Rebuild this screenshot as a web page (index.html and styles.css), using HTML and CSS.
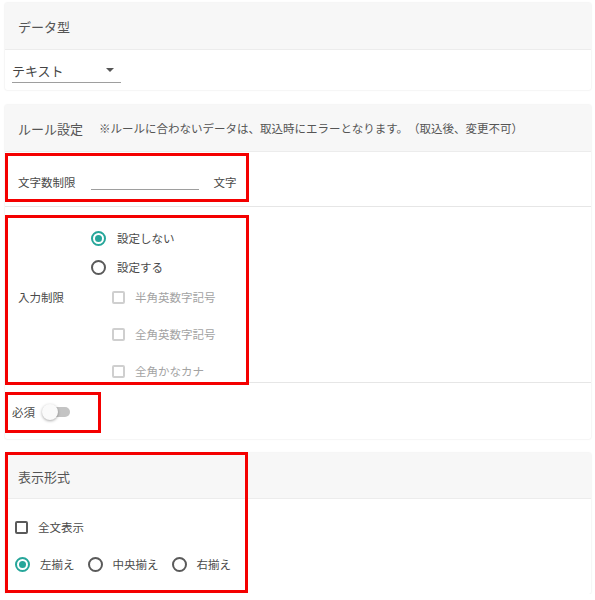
FILE: index.html
```html
<!DOCTYPE html>
<html lang="ja">
<head>
    <meta charset="UTF-8">
    <meta name="viewport" content="width=device-width, initial-scale=1.0">
    <title>データ型</title>
    <link rel="stylesheet" href="styles.css">
</head>
<body>
    <section class="card card-type">
        <div class="card-head">データ型</div>
        <div class="card-body select-row">
            <div class="select">
                <span>テキスト</span>
                <svg class="caret" width="8" height="4" viewBox="0 0 8 4"><path d="M0 0h8L4 4z" fill="#555"/></svg>
            </div>
        </div>
    </section>

    <section class="card card-rule">
        <div class="card-head">
            ルール設定<span class="note">※ルールに合わないデータは、取込時にエラーとなります。（取込後、変更不可）</span>
        </div>
        <div class="row row-length">
            <span class="label">文字数制限</span>
            <span class="line-input"></span>
            <span class="unit">文字</span>
            <div class="mark mark-length"></div>
        </div>
        <div class="row row-input">
            <span class="label label-input">入力制限</span>
            <div class="options">
                <label class="opt"><span class="radio checked"></span>設定しない</label>
                <label class="opt opt-2"><span class="radio"></span>設定する</label>
                <label class="opt opt-cb first disabled"><span class="box"></span>半角英数字記号</label>
                <label class="opt opt-cb disabled"><span class="box"></span>全角英数字記号</label>
                <label class="opt opt-cb disabled"><span class="box"></span>全角かなカナ</label>
            </div>
            <div class="mark mark-input"></div>
        </div>
        <div class="row row-required">
            <span class="label">必須</span>
            <span class="switch"><span class="thumb"></span></span>
            <div class="mark mark-required"></div>
        </div>
    </section>

    <section class="card card-view">
        <div class="card-head">表示形式</div>
        <div class="card-body view-body">
            <label class="opt"><span class="box dark"></span>全文表示</label>
            <div class="align-row">
                <label class="opt"><span class="radio checked"></span>左揃え</label>
                <label class="opt"><span class="radio"></span>中央揃え</label>
                <label class="opt"><span class="radio"></span>右揃え</label>
            </div>
        </div>
        <div class="mark mark-view"></div>
    </section>
</body>
</html>
```

FILE: styles.css
```css
*{
    margin: 0;
    padding: 0;
    box-sizing: border-box;
}
body{
    padding: 3px 4px 0 5px;
    font-family: "Noto Sans CJK JP", "Noto Sans", sans-serif;
    color: #4a4a4a;
    background: white;
    text-spacing-trim: space-all;
}
.card{
    position: relative;
    background: white;
    box-shadow: 0 0 2px rgba(0, 0, 0, 0.14);
    border-radius: 2px;
}
.card-rule{
    margin-top: 15px;
}
.card-view{
    margin-top: 14px;
}
.card-head{
    height: 47px;
    display: flex;
    align-items: center;
    padding-left: 13px;
    background-color: #f7f7f7;
    border-bottom: 1px solid #ececec;
    font-size: 13px;
    color: #555;
}
.card-view .card-head{
    height: 46px;
    padding-top: 2px;
}
.note{
    font-size: 11.5px;
    margin-left: 16px;
    color: #555;
}
.select-row{
    height: 40px;
    padding: 10px 0 0 7px;
}
.select{
    width: 109px;
    height: 23px;
    display: flex;
    align-items: center;
    justify-content: space-between;
    padding: 0 7px 2px 0;
    border-bottom: 1px solid #9e9e9e;
    font-size: 13px;
    color: #444;
}
.row{
    position: relative;
    display: flex;
    border-bottom: 1px solid #e6e6e6;
    font-size: 11.5px;
}
.row:last-child{
    border-bottom: none;
}
.row-length{
    height: 55px;
    align-items: center;
    padding: 6px 0 0 13px;
}
.line-input{
    width: 108px;
    height: 15px;
    margin-left: 15px;
    border-bottom: 1px solid #9e9e9e;
}
.unit{
    margin-left: 15px;
}
.row-input{
    height: 176px;
    padding: 23px 0 0 13px;
}
.label-input{
    width: 73px;
    margin-top: 59px;
    line-height: 16px;
}
.options{
    display: flex;
    flex-direction: column;
}
.opt{
    display: flex;
    align-items: center;
    height: 16px;
    font-size: 11.5px;
    color: #4a4a4a;
}
.opt-2{
    margin-top: 13px;
}
.opt-cb{
    margin-top: 21px;
    padding-left: 21px;
}
.opt-cb.first{
    margin-top: 14px;
}
.disabled{
    color: #a3a3a3;
}
.radio{
    width: 15px;
    height: 15px;
    border-radius: 50%;
    border: 2px solid #5a5a5a;
    margin-right: 11px;
    position: relative;
}
.radio.checked{
    border-color: #26a69a;
}
.radio.checked::after{
    content: "";
    position: absolute;
    left: 2px;
    top: 2px;
    width: 7px;
    height: 7px;
    border-radius: 50%;
    background-color: #26a69a;
}
.box{
    width: 13px;
    height: 13px;
    border: 2px solid #cfcfcf;
    border-radius: 2px;
    margin-right: 10px;
}
.box.dark{
    border-color: #5a5a5a;
}
.row-required{
    height: 56px;
    align-items: center;
    padding: 2px 0 0 7px;
}
.switch{
    position: relative;
    width: 24px;
    height: 10px;
    margin-left: 11px;
    border-radius: 5px;
    background-color: #c4c4c4;
}
.thumb{
    position: absolute;
    left: -4px;
    top: -3px;
    width: 16px;
    height: 16px;
    border-radius: 50%;
    background-color: #fafafa;
    box-shadow: 0 1px 3px rgba(0, 0, 0, 0.35);
}
.view-body{
    padding: 20px 0 22px 10px;
}
.align-row{
    display: flex;
    margin-top: 21px;
}
.align-row .opt{
    margin-right: 13px;
}
.align-row .radio{
    margin-right: 10px;
}
.mark{
    position: absolute;
    left: 0;
    border: 3px solid #f40000;
    pointer-events: none;
}
.mark-length{
    top: 1px;
    width: 244px;
    height: 49px;
}
.mark-input{
    top: 8px;
    width: 244px;
    height: 170px;
}
.mark-required{
    top: 9px;
    width: 96px;
    height: 41px;
}
.mark-view{
    top: -1px;
    width: 243px;
    height: 141px;
}
```
